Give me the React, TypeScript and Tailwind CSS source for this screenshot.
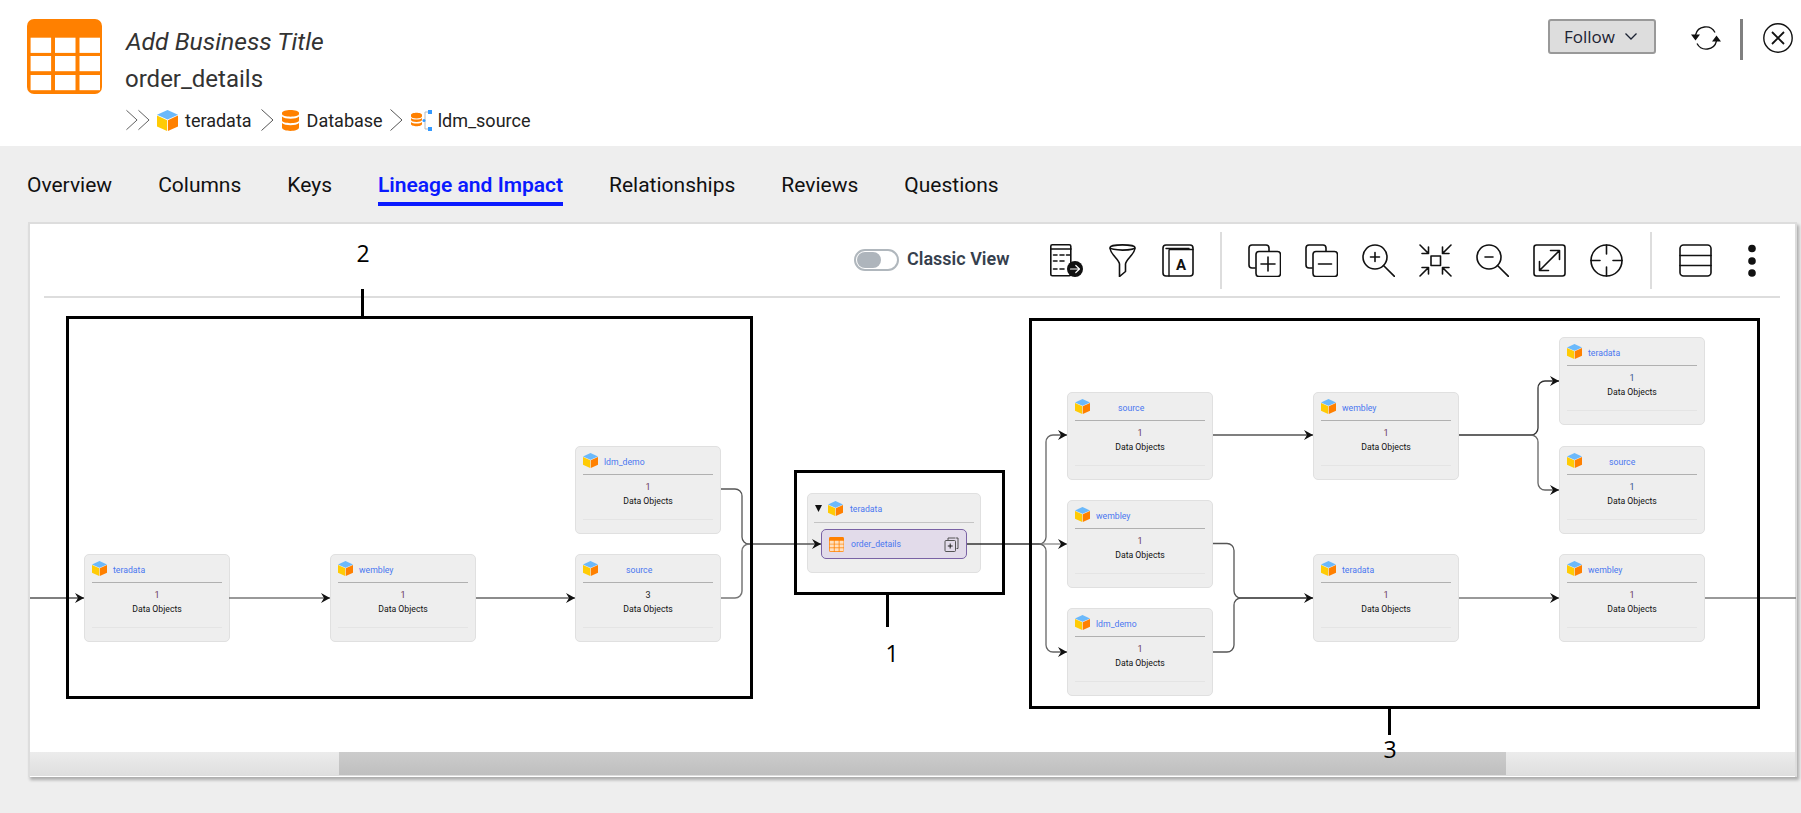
import React from "react";

const ROBOTO = "font-['Roboto',sans-serif]";

function Cube({ className }: { className: string }) {
  return (
    <svg viewBox="0 0 15 15" className={className}>
      <path d="M7.5 0 15 3.4 7.5 6.8 0 3.4Z" fill="#6bb9fb" />
      <path d="M0 3.9 7.2 7.3V15L0 11.7Z" fill="#ffcb05" />
      <path d="M15 3.9 7.8 7.3V15L15 11.7Z" fill="#ff8000" />
    </svg>
  );
}

function TableIcon({ className, cell = "#fff" }: { className: string; cell?: string }) {
  const xs = [3.6, 28, 52.5];
  const ys = [18.7, 37, 56];
  return (
    <svg viewBox="0 0 75 75" className={className}>
      <rect width="75" height="75" rx="7" fill="#ff8000" />
      {ys.map((y) =>
        xs.map((x) => <rect key={`${x}-${y}`} x={x} y={y} width="20.5" height="15.2" fill={cell} />)
      )}
    </svg>
  );
}

function Db({ className }: { className: string }) {
  return (
    <svg viewBox="0 0 17 21" className={className}>
      <path d="M0 3c0-4 17-4 17 0v1c0 3.500-17 3.500-17 0Z" fill="#ff8000" />
      <path d="M0 6.500c3 3 14 3 17 0v4c0 3.500-17 3.500-17 0Z" fill="#ff8000" />
      <path d="M0 13c3 3 14 3 17 0v4.500c0 4.500-17 4.500-17 0Z" fill="#ff8000" />
    </svg>
  );
}

function Crumb({ className }: { className: string }) {
  return (
    <svg viewBox="0 0 13 22" className={className} fill="none" stroke="#555" strokeWidth="1">
      <path d="M0.500 0.500 12 11 0.500 21.500" />
    </svg>
  );
}

function ToolIcon({ w = 33, children, className }: { w?: number; children: React.ReactNode; className: string }) {
  return (
    <svg viewBox={`0 0 ${w} 33`} className={className} fill="none" stroke="#111" strokeWidth="1.600" strokeLinecap="round" strokeLinejoin="round">
      {children}
    </svg>
  );
}

const BackRect = "M7 24H4a3 3 0 0 1-3-3V4a3 3 0 0 1 3-3h14a3 3 0 0 1 3 3v3";

function Node({
  pos,
  name,
  num = "1",
  numColor = "text-[#6b3a5a]",
  nameClass = "ml-[6px]",
}: {
  pos: string;
  name: string;
  num?: string;
  numColor?: string;
  nameClass?: string;
}) {
  return (
    <div className={`absolute ${pos} w-[146px] h-[88px] rounded-[5px] border border-[#e0e0e0] bg-[#eeeeee] px-[7px] ${ROBOTO}`}>
      <div className="flex h-[28px] items-center border-b border-[#b0b0b0] pt-[1px]">
        <Cube className="w-[15px] h-[15px] mt-[-1px]" />
        <span className={`${nameClass} mt-[3px] text-[8.700px] text-[#4a77f0] leading-none`}>{name}</span>
      </div>
      <div className={`mt-[6px] text-center text-[9px] leading-[12px] ${numColor}`}>{num}</div>
      <div className="mt-[2px] text-center text-[8.700px] leading-[12px] text-[#111]">Data Objects</div>
      <div className="mt-[12px] border-t border-[#e4e4e4]" />
    </div>
  );
}

function Arrow({ x, y }: { x: number; y: number }) {
  return <path d={`M${x - 9} ${y - 5}L${x} ${y}L${x - 9} ${y + 5}L${x - 6} ${y}Z`} fill="#111" stroke="none" />;
}

function Edges() {
  return (
    <svg viewBox="30 298 1766 454" className="absolute inset-0 w-[1766px] h-[454px]" fill="none" stroke="#555" strokeWidth="1.300">
      <path d="M30 598H84" />
      <path d="M229 598H330" stroke="#777" />
      <path d="M476 598H575" stroke="#666" />
      <path d="M721 489H735a7 7 0 0 1 7 7V537a7 7 0 0 0 7 7H821" />
      <path d="M721 598H735a7 7 0 0 0 7-7V551a7 7 0 0 1 7-7" stroke="#777" strokeWidth="1.500" />
      <path d="M967 544H1040" stroke="#333" />
      <path d="M1039 544a7 7 0 0 0 7-7V442a7 7 0 0 1 7-7H1067" stroke="#666" />
      <path d="M1039 544H1067" stroke="#888" />
      <path d="M1039 544a7 7 0 0 1 7 7V645a7 7 0 0 0 7 7H1067" stroke="#666" />
      <path d="M1213 435H1313" />
      <path d="M1213 543.500H1227a7 7 0 0 1 7 7V591a7 7 0 0 0 7 7H1313" />
      <path d="M1213 652H1227a7 7 0 0 0 7-7V605a7 7 0 0 1 7-7H1313" />
      <path d="M1459 598H1559" stroke="#777" />
      <path d="M1705 598H1796" stroke="#777" />
      <path d="M1459 435H1531a7 7 0 0 0 7-7V388a7 7 0 0 1 7-7H1559" stroke="#333" />
      <path d="M1531 435a7 7 0 0 1 7 7V483a7 7 0 0 0 7 7H1559" stroke="#666" />
      {[
        [84, 598], [330, 598], [575, 598], [821, 544], [1067, 435], [1067, 544], [1067, 652],
        [1313, 435], [1313, 598], [1559, 381], [1559, 490], [1559, 598],
      ].map(([x, y]) => (
        <Arrow key={`${x}-${y}`} x={x} y={y} />
      ))}
    </svg>
  );
}

function Toolbar() {
  const ic = "w-[33px] h-[33px] shrink-0";
  return (
    <div className={`flex h-[72px] items-center pl-[824px] ${ROBOTO}`}>
      <div className="flex h-[22px] w-[45px] items-center rounded-full border-2 border-[#b0b7bd] pl-[1px]">
        <div className="h-[16px] w-[24px] rounded-full bg-[#aeb5bc]" />
      </div>
      <span className="ml-[8px] -mt-[2px] w-[102px] text-[18px] font-semibold text-[#36404d] whitespace-nowrap leading-none">Classic View</span>
      <div className="ml-[41px] flex gap-[23px]">
        <ToolIcon className={ic}>
          <rect x="0.800" y="0.800" width="20" height="31" rx="1.500" />
          <path d="M1 5H21M3.500 11H7M10 11H14M16.500 11H20M3.500 17H7M10 17H14M3.500 25H7M10 25H14" />
          <circle cx="25" cy="25" r="8" fill="#111" stroke="none" />
          <path d="M20.500 25H29M25.800 21.500 29.500 25 25.800 28.500" stroke="#fff" strokeWidth="1.200" />
        </ToolIcon>
        <ToolIcon className={ic}>
          <ellipse cx="16.500" cy="3.500" rx="12.500" ry="2.600" />
          <path d="M4 4.500C5 11 13 15 13.500 20V32.500L19.500 27.500V20C20 15 28 11 29 4.500" />
        </ToolIcon>
        <ToolIcon className={ic}>
          <rect x="1" y="1" width="30" height="31" rx="3" />
          <path d="M7 32V6.500a1 1 0 0 1 1-1H31M4 4.500H27" strokeWidth="1.400" />
          <text x="19" y="26" textAnchor="middle" fontSize="15" fontWeight="700" fill="#111" stroke="none">A</text>
        </ToolIcon>
      </div>
      <div className="ml-[25px] h-[57px] w-[2px] bg-[#dddddd]" />
      <div className="ml-[26px] flex gap-[24px]">
        <ToolIcon className={ic}>
          <path d={BackRect} />
          <rect x="8" y="7.500" width="24.500" height="25" rx="3" />
          <path d="M20 13V27M13 20H27" />
        </ToolIcon>
        <ToolIcon className={ic}>
          <path d={BackRect} />
          <rect x="8" y="7.500" width="24.500" height="25" rx="3" />
          <path d="M13.500 20H26.500" />
        </ToolIcon>
        <ToolIcon className={ic}>
          <circle cx="13" cy="13" r="12" />
          <path d="M21.500 21.500 32.500 32.500M13 8.500V17.500M8.500 13H17.500" />
        </ToolIcon>
        <ToolIcon className={ic}>
          <rect x="12" y="12" width="9.500" height="9.500" />
          <path d="M1 1 9.500 9.500M9.500 3V9.500H3M32 1 23.500 9.500M23.500 3V9.500H30M1 32 9.500 23.500M3 23.500H9.500V30M32 32 23.500 23.500M30 23.500H23.500V30" />
        </ToolIcon>
        <ToolIcon className={ic}>
          <circle cx="13" cy="13" r="12" />
          <path d="M21.500 21.500 32.500 32.500M9 13H17" />
        </ToolIcon>
        <ToolIcon className={ic}>
          <rect x="1" y="1" width="31" height="31" rx="2.500" />
          <path d="M7 26 26 7M17.500 6.500H26.500V15.500M6.500 17.500V26.500H15.500" />
        </ToolIcon>
        <ToolIcon className={ic}>
          <circle cx="16.500" cy="16.500" r="15.500" />
          <path d="M16.500 1V10M16.500 23V32M1 16.500H10M23 16.500H32" />
        </ToolIcon>
      </div>
      <div className="ml-[27px] h-[57px] w-[2px] bg-[#dddddd]" />
      <ToolIcon className={`ml-[27px] ${ic}`}>
        <rect x="1" y="1" width="31" height="31" rx="3.500" />
        <path d="M1 11.500H32M1 21.500H32" />
      </ToolIcon>
      <svg viewBox="0 0 8 33" className="ml-[36px] w-[8px] h-[33px] shrink-0" fill="#111">
        <circle cx="4" cy="4.500" r="3.800" />
        <circle cx="4" cy="17" r="3.800" />
        <circle cx="4" cy="29" r="3.800" />
      </svg>
    </div>
  );
}

export default function App() {
  const tabs = ["Overview", "Columns", "Keys", "Lineage and Impact", "Relationships", "Reviews", "Questions"];
  return (
    <div className={`min-h-[813px] w-[1801px] overflow-hidden bg-[#eeeeee] ${ROBOTO}`}>
      {/* header */}
      <header className="flex h-[146px] items-start bg-white pl-[27px]">
        <TableIcon className="mt-[19px] h-[75px] w-[75px] shrink-0" />
        <div className="ml-[24px] flex flex-col">
          <div className="mt-[26px] text-[24.700px] italic leading-[32px] text-[#333]">Add Business Title</div>
          <div className="mt-[5px] -ml-[1px] text-[24px] leading-[32px] text-[#333]">order_details</div>
          <div className="mt-[13px] flex h-[24px] items-center text-[18px] text-[#222]">
            <Crumb className="h-[22px] w-[12px]" />
            <Crumb className="ml-[0px] h-[22px] w-[12px]" />
            <Cube className="ml-[7px] h-[21px] w-[21px]" />
            <span className="ml-[7px]">teradata</span>
            <Crumb className="ml-[9px] h-[22px] w-[13px]" />
            <Db className="ml-[8px] h-[21px] w-[17px]" />
            <span className="ml-[8px]">Database</span>
            <Crumb className="ml-[7px] h-[22px] w-[13px]" />
            <svg viewBox="0 0 21 21" className="ml-[8px] h-[21px] w-[21px]">
              <path d="M0 5c0-3 11-3 11 0v1.500c0 2.500-11 2.500-11 0Z M0 8c2 2 9 2 11 0v2c0 2.500-11 2.500-11 0Z M0 12c2 2 9 2 11 0v2c0 3-11 3-11 0Z" fill="#ff8000" />
              <path d="M17 2H14V19H17" fill="none" stroke="#bbb" strokeWidth="1" />
              <rect x="17" y="0" width="4" height="4" fill="#3399ff" />
              <rect x="17" y="17" width="4" height="4" fill="#3399ff" />
              <circle cx="13" cy="10.500" r="1.500" fill="#3399ff" />
            </svg>
            <span className="ml-[6px]">ldm_source</span>
          </div>
        </div>
        <div className="ml-auto mt-[19px] flex items-start pr-[8px]">
          <button className="flex h-[35px] w-[108px] items-center rounded-[3px] border-2 border-[#999999] bg-[#dddddd] pl-[14px] font-['Open_Sans',sans-serif] text-[17px] text-[#1c2333]">
            Follow
            <svg viewBox="0 0 12 7" className="ml-[10px] h-[7px] w-[12px]" fill="none" stroke="#1c2333" strokeWidth="1.300">
              <path d="M0.500 0.500 6 6 11.500 0.500" />
            </svg>
          </button>
          <svg viewBox="0 0 30 26" className="ml-[35px] mt-[6px] h-[26px] w-[30px]" fill="none" stroke="#111" strokeWidth="1.300">
            <path d="M4.500 10A10.500 10.500 0 0 1 24 7.500" />
            <path d="M25.500 16A10.500 10.500 0 0 1 6 18.500" />
            <path d="M0 9.500H9L4.500 15.500Z M30 16.500H21L25.500 10.500Z" fill="#111" stroke="none" />
          </svg>
          <div className="ml-[19px] h-[41px] w-[3px] bg-[#808080]" />
          <svg viewBox="0 0 30 30" className="ml-[20px] mt-[4px] h-[30px] w-[30px]" fill="none" stroke="#111" strokeWidth="1.400">
            <circle cx="15" cy="15" r="14.200" />
            <path d="M9 9 21 21M21 9 9 21" strokeWidth="1.800" />
          </svg>
        </div>
      </header>

      {/* tabs */}
      <nav className="flex h-[76px] items-start gap-[46px] pl-[27px]">
        {tabs.map((t, i) => (
          <div
            key={t}
            className={
              i === 3
                ? "border-b-4 border-[#0a1aff] pt-[25px] pb-[3px] text-[21px] font-semibold leading-[28px] text-[#0a1aff]"
                : "pt-[25px] pb-[3px] text-[21px] leading-[28px] text-[#111]"
            }
          >
            {t}
          </div>
        ))}
      </nav>

      {/* panel */}
      <section className="ml-[28px] flex h-[555px] w-[1769px] flex-col border-t-2 border-l-2 border-r-2 border-[#dddddd] bg-white shadow-[2px_3px_3px_rgba(0,0,0,0.28)]">
        <Toolbar />
        <div className="ml-[14px] mr-[15px] h-[2px] bg-[#dddddd]" />
        <div className="relative h-[454px] shrink-0">
          <Node pos="left-[54px] top-[256px]" name="teradata" />
          <Node pos="left-[300px] top-[256px]" name="wembley" />
          <Node pos="left-[545px] top-[256px]" name="source" num="3" numColor="text-[#222]" nameClass="ml-[28px]" />
          <Node pos="left-[545px] top-[148px]" name="ldm_demo" />
          <Node pos="left-[1037px] top-[94px]" name="source" nameClass="ml-[28px]" />
          <Node pos="left-[1037px] top-[202px]" name="wembley" />
          <Node pos="left-[1037px] top-[310px]" name="ldm_demo" />
          <Node pos="left-[1283px] top-[94px]" name="wembley" />
          <Node pos="left-[1283px] top-[256px]" name="teradata" />
          <Node pos="left-[1529px] top-[39px]" name="teradata" numColor="text-[#34558f]" />
          <Node pos="left-[1529px] top-[148px]" name="source" numColor="text-[#34558f]" nameClass="ml-[27px]" />
          <Node pos="left-[1529px] top-[256px]" name="wembley" />

          {/* center node */}
          <div className="absolute left-[777px] top-[195px] h-[80px] w-[174px] rounded-[5px] border border-[#e0e0e0] bg-[#eeeeee] px-[6px]">
            <div className="flex h-[29px] items-center border-b border-[#c4c4c4]">
              <svg viewBox="0 0 7 7" className="ml-[1px] h-[7px] w-[7px]"><path d="M0 0H7L3.500 7Z" fill="#111" /></svg>
              <Cube className="ml-[6px] h-[15px] w-[15px]" />
              <span className="ml-[7px] mt-[2px] text-[8.700px] leading-none text-[#4a77f0]">teradata</span>
            </div>
            <div className="ml-[7px] mt-[6px] flex h-[30px] w-[146px] items-center rounded-[5px] border border-[#7a62a5] bg-[#e2dbea] pl-[7px]">
              <TableIcon className="h-[15px] w-[15px]" cell="#ffe0c0" />
              <span className="ml-[7px] text-[8.700px] leading-none text-[#4a77f0]">order_details</span>
              <svg viewBox="0 0 15 15" className="ml-auto mr-[7px] h-[15px] w-[15px]" fill="none" stroke="#444" strokeWidth="0.900">
                <path d="M4 3V1H11M11.500 1H14V11.500H12.500" />
                <rect x="1" y="3.500" width="10.500" height="11" rx="1" fill="#e2dbea" />
                <path d="M6.200 6.500V11.500M3.800 9H8.700" stroke="#111" />
              </svg>
            </div>
          </div>

          <Edges />

          {/* annotations */}
          <div className="absolute left-[36px] top-[18px] h-[383px] w-[687px] border-[3px] border-black" />
          <div className="absolute left-[331px] top-[-9px] h-[27px] w-[3px] bg-black" />
          <div className="absolute left-[323px] top-[-60px] w-[20px] text-center font-['Open_Sans',sans-serif] text-[23px] leading-[30px] text-black">2</div>

          <div className="absolute left-[764px] top-[172px] h-[125px] w-[211px] border-[3px] border-black" />
          <div className="absolute left-[856px] top-[297px] h-[32px] w-[3px] bg-black" />
          <div className="absolute left-[852px] top-[340px] w-[20px] text-center font-['Open_Sans',sans-serif] text-[23px] leading-[30px] text-black">1</div>

          <div className="absolute left-[999px] top-[20px] h-[391px] w-[731px] border-[3px] border-black" />
          <div className="absolute left-[1358px] top-[411px] h-[26px] w-[3px] bg-black" />
          <div className="absolute left-[1350px] top-[436px] w-[20px] text-center font-['Open_Sans',sans-serif] text-[23px] leading-[30px] text-black">3</div>
        </div>
        <div className="h-[24px] shrink-0 bg-gradient-to-b from-[#ececec] to-[#dedede]">
          <div className="ml-[309px] h-[23px] w-[1167px] bg-gradient-to-b from-[#cccccc] to-[#bfbfbf]" />
        </div>
      </section>
    </div>
  );
}
